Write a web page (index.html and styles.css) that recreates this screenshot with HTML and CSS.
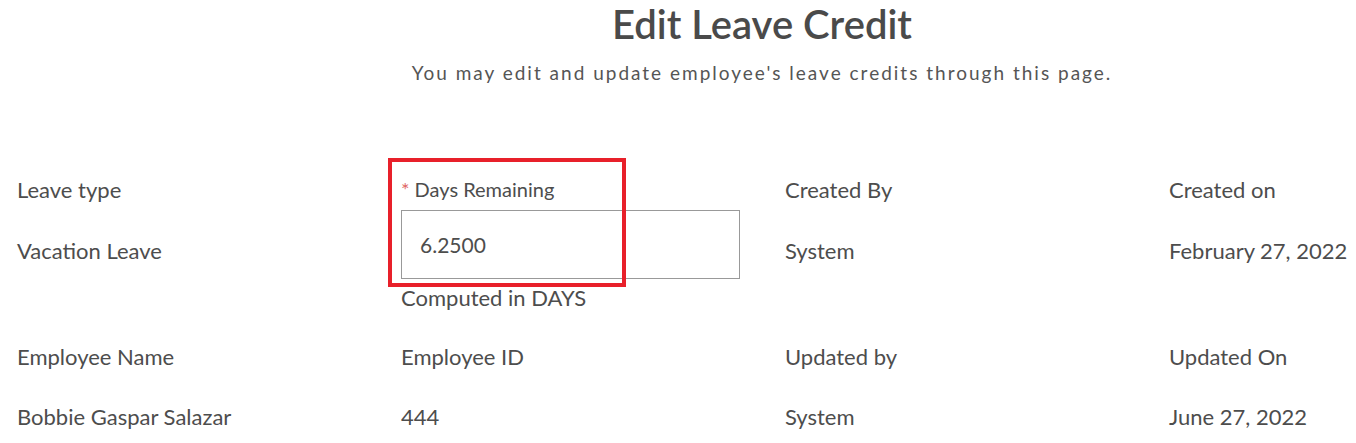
FILE: index.html
```html
<!DOCTYPE html>
<html lang="en">
<head>
    <meta charset="UTF-8">
    <title>Edit Leave Credit</title>
    <meta name="viewport" content="width=device-width, initial-scale=1.0">
    <link rel="stylesheet" href="styles.css">
</head>
<body>

    <!-- Page heading -->
    <header class="page-head">
        <h1>Edit Leave Credit</h1>
        <p class="subtitle">You may edit and update employee's leave credits through this page.</p>
    </header>

    <!-- Leave credit details -->
    <main class="details">
        <div class="label r1 c1">Leave type</div>
        <div class="value r2 c1">Vacation Leave</div>

        <div class="field c2">
            <label class="field-label" for="days"><span class="req">*</span> Days Remaining</label>
            <input id="days" class="field-input" type="text" value="6.2500">
            <div class="help">Computed in DAYS</div>
            <div class="highlight-box"></div>
        </div>

        <div class="label r1 c3">Created By</div>
        <div class="value r2 c3">System</div>

        <div class="label r1 c4">Created on</div>
        <div class="value r2 c4">February 27, 2022</div>

        <div class="label r4 c1">Employee Name</div>
        <div class="value r5 c1">Bobbie Gaspar Salazar</div>

        <div class="label r4 c2">Employee ID</div>
        <div class="value r5 c2">444</div>

        <div class="label r4 c3">Updated by</div>
        <div class="value r5 c3">System</div>

        <div class="label r4 c4">Updated On</div>
        <div class="value r5 c4">June 27, 2022</div>
    </main>

</body>
</html>
```

FILE: styles.css
```css
body {
    font-family: Lato, "Open Sans", sans-serif;
    color: #4d4d4d;
    margin: 0; padding: 0;
    background: #fff;
}
.page-head {
    width: 1490px;
    margin-left: 17px;
    text-align: center;
}
.page-head h1 {
    margin: 0;
    font-size: 40px;
    line-height: 48px;
    font-weight: 600;
    color: #4a4a4a;
}
.subtitle {
    margin: 12px 0 0;
    font-size: 19px;
    line-height: 26px;
    letter-spacing: 2px;
    color: #555;
}
.details {
    display: grid;
    grid-template-columns: repeat(4, 384px);
    grid-template-rows: 40px 70px 36px 21px 40px 20px 40px;
    margin: 84px 0 0 17px;
    font-size: 22px;
}
.label, .value {
    line-height: 40px;
    white-space: nowrap;
}
.value.r2 { grid-row: 2; padding-top: 21px; }
.r1 { grid-row: 1; }
.r4 { grid-row: 5; }
.r5 { grid-row: 7; }
.c1 { grid-column: 1; }
.c2 { grid-column: 2; }
.c3 { grid-column: 3; }
.c4 { grid-column: 4; }
.field {
    grid-row: 1 / 4;
    position: relative;
    display: grid;
    grid-template-rows: 40px 70px 36px;
}
.field-label {
    font-size: 20px;
    line-height: 38px;
}
.req {
    color: #e06666;
}
.field-input {
    box-sizing: border-box;
    width: 339px;
    height: 69px;
    border: 1px solid #999;
    padding: 0 18px;
    font-family: inherit;
    font-size: 21px;
    color: #4d4d4d;
    outline: none;
}
.help {
    line-height: 36px;
}
/* annotation box drawn over the field */
.highlight-box {
    position: absolute;
    left: -13px;
    top: -12px;
    width: 230px;
    height: 121px;
    border: 4px solid #e8202a;
}
```
